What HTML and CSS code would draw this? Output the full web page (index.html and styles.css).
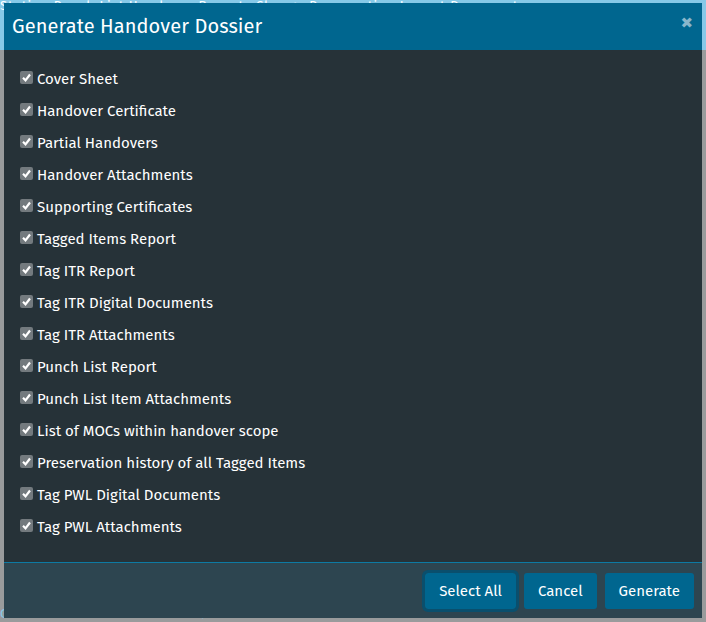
FILE: index.html
```html
<!DOCTYPE html>
<html>
<head>
<meta charset="utf-8">
<link rel="stylesheet" href="styles.css">
</head>
<body>
<div class="backdrop">
  <div class="bg-top">Station Punch List Handover Reports Change Preservation Import Documents</div>
  <div class="bg-bottom">G FIC in Point - Shutdown 2019</div>
  <div class="modal">
    <div class="modal-header">
      <h1 class="modal-title">Generate Handover Dossier</h1>
      <span class="close">&#10006;</span>
    </div>
    <div class="modal-body">
      <label class="item"><span class="cb"><svg viewBox="0 0 13 13"><path d="M3 6.8 L5.5 9.3 L10 3.5" /></svg></span>Cover Sheet</label>
      <label class="item"><span class="cb"><svg viewBox="0 0 13 13"><path d="M3 6.8 L5.5 9.3 L10 3.5" /></svg></span>Handover Certificate</label>
      <label class="item"><span class="cb"><svg viewBox="0 0 13 13"><path d="M3 6.8 L5.5 9.3 L10 3.5" /></svg></span>Partial Handovers</label>
      <label class="item"><span class="cb"><svg viewBox="0 0 13 13"><path d="M3 6.8 L5.5 9.3 L10 3.5" /></svg></span>Handover Attachments</label>
      <label class="item"><span class="cb"><svg viewBox="0 0 13 13"><path d="M3 6.8 L5.5 9.3 L10 3.5" /></svg></span>Supporting Certificates</label>
      <label class="item"><span class="cb"><svg viewBox="0 0 13 13"><path d="M3 6.8 L5.5 9.3 L10 3.5" /></svg></span>Tagged Items Report</label>
      <label class="item"><span class="cb"><svg viewBox="0 0 13 13"><path d="M3 6.8 L5.5 9.3 L10 3.5" /></svg></span>Tag ITR Report</label>
      <label class="item"><span class="cb"><svg viewBox="0 0 13 13"><path d="M3 6.8 L5.5 9.3 L10 3.5" /></svg></span>Tag ITR Digital Documents</label>
      <label class="item"><span class="cb"><svg viewBox="0 0 13 13"><path d="M3 6.8 L5.5 9.3 L10 3.5" /></svg></span>Tag ITR Attachments</label>
      <label class="item"><span class="cb"><svg viewBox="0 0 13 13"><path d="M3 6.8 L5.5 9.3 L10 3.5" /></svg></span>Punch List Report</label>
      <label class="item"><span class="cb"><svg viewBox="0 0 13 13"><path d="M3 6.8 L5.5 9.3 L10 3.5" /></svg></span>Punch List Item Attachments</label>
      <label class="item"><span class="cb"><svg viewBox="0 0 13 13"><path d="M3 6.8 L5.5 9.3 L10 3.5" /></svg></span>List of MOCs within handover scope</label>
      <label class="item"><span class="cb"><svg viewBox="0 0 13 13"><path d="M3 6.8 L5.5 9.3 L10 3.5" /></svg></span>Preservation history of all Tagged Items</label>
      <label class="item"><span class="cb"><svg viewBox="0 0 13 13"><path d="M3 6.8 L5.5 9.3 L10 3.5" /></svg></span>Tag PWL Digital Documents</label>
      <label class="item"><span class="cb"><svg viewBox="0 0 13 13"><path d="M3 6.8 L5.5 9.3 L10 3.5" /></svg></span>Tag PWL Attachments</label>
    </div>
    <div class="modal-footer">
      <button class="btn focused">Select All</button>
      <button class="btn">Cancel</button>
      <button class="btn">Generate</button>
    </div>
  </div>
</div>
</body>
</html>
```
FILE: styles.css
```css
* { box-sizing: border-box; }
html, body { margin: 0; padding: 0; }
body {
  width: 706px;
  height: 622px;
  overflow: hidden;
  background: #999b9c;
  font-family: "Fira Sans", "Open Sans", "Noto Sans", sans-serif;
}
.backdrop {
  position: relative;
  width: 706px;
  height: 622px;
  overflow: hidden;
  padding: 3px 4px 4px 4px;
  background: linear-gradient(#86c9e8 0, #86c9e8 50px, #999b9c 50px);
}
.bg-top {
  position: absolute;
  left: 0; top: 0;
  color: #fff;
  font-size: 13px;
  line-height: 12px;
  white-space: nowrap;
  letter-spacing: 1px;
}
.bg-bottom {
  position: absolute;
  left: 0; top: 606px;
  color: #86c9e8;
  font-size: 13px;
  white-space: nowrap;
  letter-spacing: 1px;
}
.modal {
  position: relative;
  width: 698px;
  height: 615px;
  display: flex;
  flex-direction: column;
  background: #263238;
}
.modal-header {
  height: 47px;
  background: #00668f;
  display: flex;
  align-items: center;
  justify-content: space-between;
  padding: 0 9px 0 8px;
}
.modal-title {
  margin: 0;
  margin-top: -1px;
  font-weight: normal;
  font-size: 20px;
  color: #ffffff;
  letter-spacing: 0.1px;
}
.close {
  color: #8ab6cb;
  font-size: 15px;
  margin-top: -8px;
  font-family: "DejaVu Sans", sans-serif;
  font-weight: bold;
}
.modal-body {
  flex: 1;
  padding: 13px 0 0 16px;
  display: flex;
  flex-direction: column;
}
.item {
  height: 32px;
  display: flex;
  align-items: center;
  color: #ffffff;
  font-size: 15px;
  line-height: 32px;
}
.cb {
  width: 13px;
  height: 13px;
  background: #737a7e;
  border-radius: 2px;
  margin-right: 4px;
  margin-top: -4px;
  display: flex;
}
.cb svg { width: 13px; height: 13px; }
.cb path {
  fill: none;
  stroke: #ffffff;
  stroke-width: 2.2;
}
.modal-footer {
  height: 56px;
  border-top: 1px solid #0d7aa3;
  background: #2d4550;
  display: flex;
  justify-content: flex-end;
  align-items: center;
  gap: 8px;
  padding: 0 8px 0 0;
}
.btn {
  height: 36px;
  background: #00668f;
  color: #ffffff;
  border: none;
  border-radius: 3px;
  font-family: inherit;
  font-size: 15px;
  padding: 0 14px;
}
.btn.focused {
  outline: 3px solid #0a4f6d;
  margin-right: 0;
}
```
